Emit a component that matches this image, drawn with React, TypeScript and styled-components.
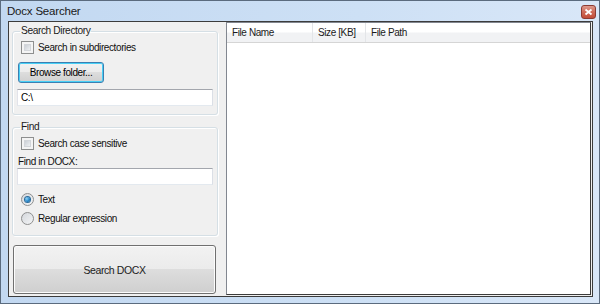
import React, { useState } from 'react';
import styled, { createGlobalStyle } from 'styled-components';

const GlobalStyle = createGlobalStyle`
  html, body {
    margin: 0;
    padding: 0;
    background: #ffffff;
  }
  * {
    box-sizing: border-box;
  }
`;

const Window = styled.div`
  width: 600px;
  height: 304px;
  border: 1px solid #5b6b7e;
  background: linear-gradient(90deg, #c2d8f1 0%, #cde0f5 60%, #d9e7f8 100%);
  display: flex;
  flex-direction: column;
  font-family: "Liberation Sans", Arial, sans-serif;
  font-size: 10px;
  letter-spacing: -0.4px;
  color: #000;
`;

const TitleBar = styled.div`
  height: 20px;
  display: flex;
  align-items: center;
  justify-content: space-between;
  padding: 0 3px 0 6px;
`;

const Title = styled.span`
  font-size: 11.5px;
  letter-spacing: -0.2px;
  color: #1a1a1a;
`;

const CloseButton = styled.div`
  width: 15px;
  height: 14px;
  margin-top: 1px;
  border: 1px solid #8c3b33;
  border-radius: 3px;
  background: linear-gradient(180deg, #de9a8e 0%, #cf6a58 50%, #c24d39 100%);
  display: flex;
  align-items: center;
  justify-content: center;
`;

const Frame = styled.div`
  flex: 1;
  padding: 0 6px 6px 7px;
  display: flex;
`;

const Client = styled.div`
  flex: 1;
  border: 1px solid #3c3c3c;
  background: #f0f0f0;
  display: flex;
  padding: 0 1px 1px 3px;
  gap: 9px;
`;

const LeftPanel = styled.div`
  width: 205px;
  display: flex;
  flex-direction: column;
  padding-top: 3px;
`;

const Group = styled.fieldset<{ $height: number; $top?: number }>`
  margin: ${(p) => p.$top ?? 0}px 0 0 0;
  height: ${(p) => p.$height}px;
  border: 1px solid #d5dfe5;
  border-radius: 3px;
  padding: 0 4px 0 4px;
  display: flex;
  flex-direction: column;
  box-shadow: inset 1px 1px 0 #ffffff, 1px 1px 0 #ffffff;
`;

const Legend = styled.legend`
  padding: 0 1px;
  margin-left: 3px;
  font-size: 10.2px;
  color: #1a1a1a;
  line-height: 12px;
`;

const CheckRow = styled.label<{ $top: number }>`
  display: flex;
  align-items: center;
  gap: 4px;
  margin-top: ${(p) => p.$top}px;
  margin-left: 4px;
  height: 13px;
  white-space: nowrap;
  color: #111;
`;

const CheckBox = styled.span`
  width: 13px;
  height: 13px;
  border: 1px solid #8e8f8f;
  background: #f4f4f4;
  display: inline-block;
  position: relative;
  &::after {
    content: '';
    position: absolute;
    inset: 2px;
    background: linear-gradient(135deg, #cbcfd5 0%, #eef0f2 100%);
    border: 1px solid #d3d6da;
  }
`;

const Radio = styled.span<{ $checked: boolean }>`
  width: 13px;
  height: 13px;
  border-radius: 50%;
  border: 1px solid #8e8f8f;
  background: linear-gradient(135deg, #d4d7dc 0%, #f4f5f6 100%);
  display: inline-flex;
  align-items: center;
  justify-content: center;
  &::after {
    content: '';
    width: 5px;
    height: 5px;
    border-radius: 50%;
    display: ${(p) => (p.$checked ? 'block' : 'none')};
    background: radial-gradient(circle at 35% 35%, #8fd3f7 0%, #1c7fc3 60%, #0d4f86 100%);
    box-shadow: 0 0 0 1px #2a6a9a;
  }
`;

const PushButton = styled.button<{ $focused?: boolean }>`
  font-family: inherit;
  letter-spacing: inherit;
  font-size: 10px;
  color: #000;
  border: 1px solid ${(p) => (p.$focused ? '#3c7fb1' : '#707070')};
  border-radius: 3px;
  background: linear-gradient(180deg, #f2f2f2 0%, #ebebeb 49%, #dddddd 50%, #cfcfcf 100%);
  box-shadow: inset 0 0 0 1px ${(p) => (p.$focused ? '#48d0f6' : '#fcfcfc')};
  padding: 0;
  cursor: default;
`;

const BrowseButton = styled(PushButton)`
  width: 86px;
  height: 21px;
  margin-top: 8px;
  margin-left: 1px;
`;

const TextBox = styled.div<{ $top: number }>`
  height: 17px;
  width: 196px;
  margin-top: ${(p) => p.$top}px;
  border: 1px solid #abadb3;
  border-top-color: #a3a6ad;
  border-left-color: #e2e3ea;
  border-right-color: #dbdfe6;
  border-bottom-color: #e3e9ef;
  background: #fff;
  padding: 2px 3px;
  line-height: 11px;
`;

const FieldLabel = styled.div`
  margin-top: 6px;
  margin-left: 1px;
  height: 12px;
  color: #111;
`;

const SearchButton = styled(PushButton)`
  margin: 9px 0 0 1px;
  width: 203px;
  height: 49px;
  font-size: 10.5px;
  color: #222;
`;

const ListView = styled.div`
  flex: 1;
  border: 1px solid #828790;
  border-right-color: #3c3c3c;
  border-bottom-color: #3c3c3c;
  background: #fff;
  display: flex;
  flex-direction: column;
`;

const Header = styled.div`
  height: 20px;
  display: flex;
  background: linear-gradient(180deg, #ffffff 0%, #ffffff 45%, #f1f2f4 55%, #f1f2f4 100%);
  border-bottom: 1px solid #d5d5d5;
`;

const Column = styled.div<{ $width?: number }>`
  ${(p) => (p.$width ? `width: ${p.$width}px;` : 'flex: 1;')}
  display: flex;
  align-items: center;
  padding-left: 5px;
  border-right: ${(p) => (p.$width ? '1px solid #e3e5e8' : 'none')};
  color: #1a1a1a;
  white-space: nowrap;
`;

const CloseGlyph = () => (
  <svg width="9" height="8" viewBox="0 0 9 8">
    <path d="M1.5 1.5 L7.5 6.5 M7.5 1.5 L1.5 6.5" stroke="#fff" strokeWidth="1.8" />
  </svg>
);

export default function App() {
  const [mode] = useState<'text' | 'regex'>('text');

  return (
    <>
      <GlobalStyle />
      <Window>
        <TitleBar>
          <Title>Docx Searcher</Title>
          <CloseButton>
            <CloseGlyph />
          </CloseButton>
        </TitleBar>
        <Frame>
          <Client>
            <LeftPanel>
              <Group $height={90}>
                <Legend>Search Directory</Legend>
                <CheckRow $top={4}>
                  <CheckBox />
                  Search in subdirectories
                </CheckRow>
                <BrowseButton $focused>Browse folder...</BrowseButton>
                <TextBox $top={6}>C:\</TextBox>
              </Group>
              <Group $height={115} $top={6}>
                <Legend>Find</Legend>
                <CheckRow $top={4}>
                  <CheckBox />
                  Search case sensitive
                </CheckRow>
                <FieldLabel>Find in DOCX:</FieldLabel>
                <TextBox $top={0} />
                <CheckRow $top={8}>
                  <Radio $checked={mode === 'text'} />
                  Text
                </CheckRow>
                <CheckRow $top={6}>
                  <Radio $checked={mode === 'regex'} />
                  Regular expression
                </CheckRow>
              </Group>
              <SearchButton>Search DOCX</SearchButton>
            </LeftPanel>
            <ListView>
              <Header>
                <Column $width={86}>File Name</Column>
                <Column $width={53}>Size [KB]</Column>
                <Column>File Path</Column>
              </Header>
            </ListView>
          </Client>
        </Frame>
      </Window>
    </>
  );
}
